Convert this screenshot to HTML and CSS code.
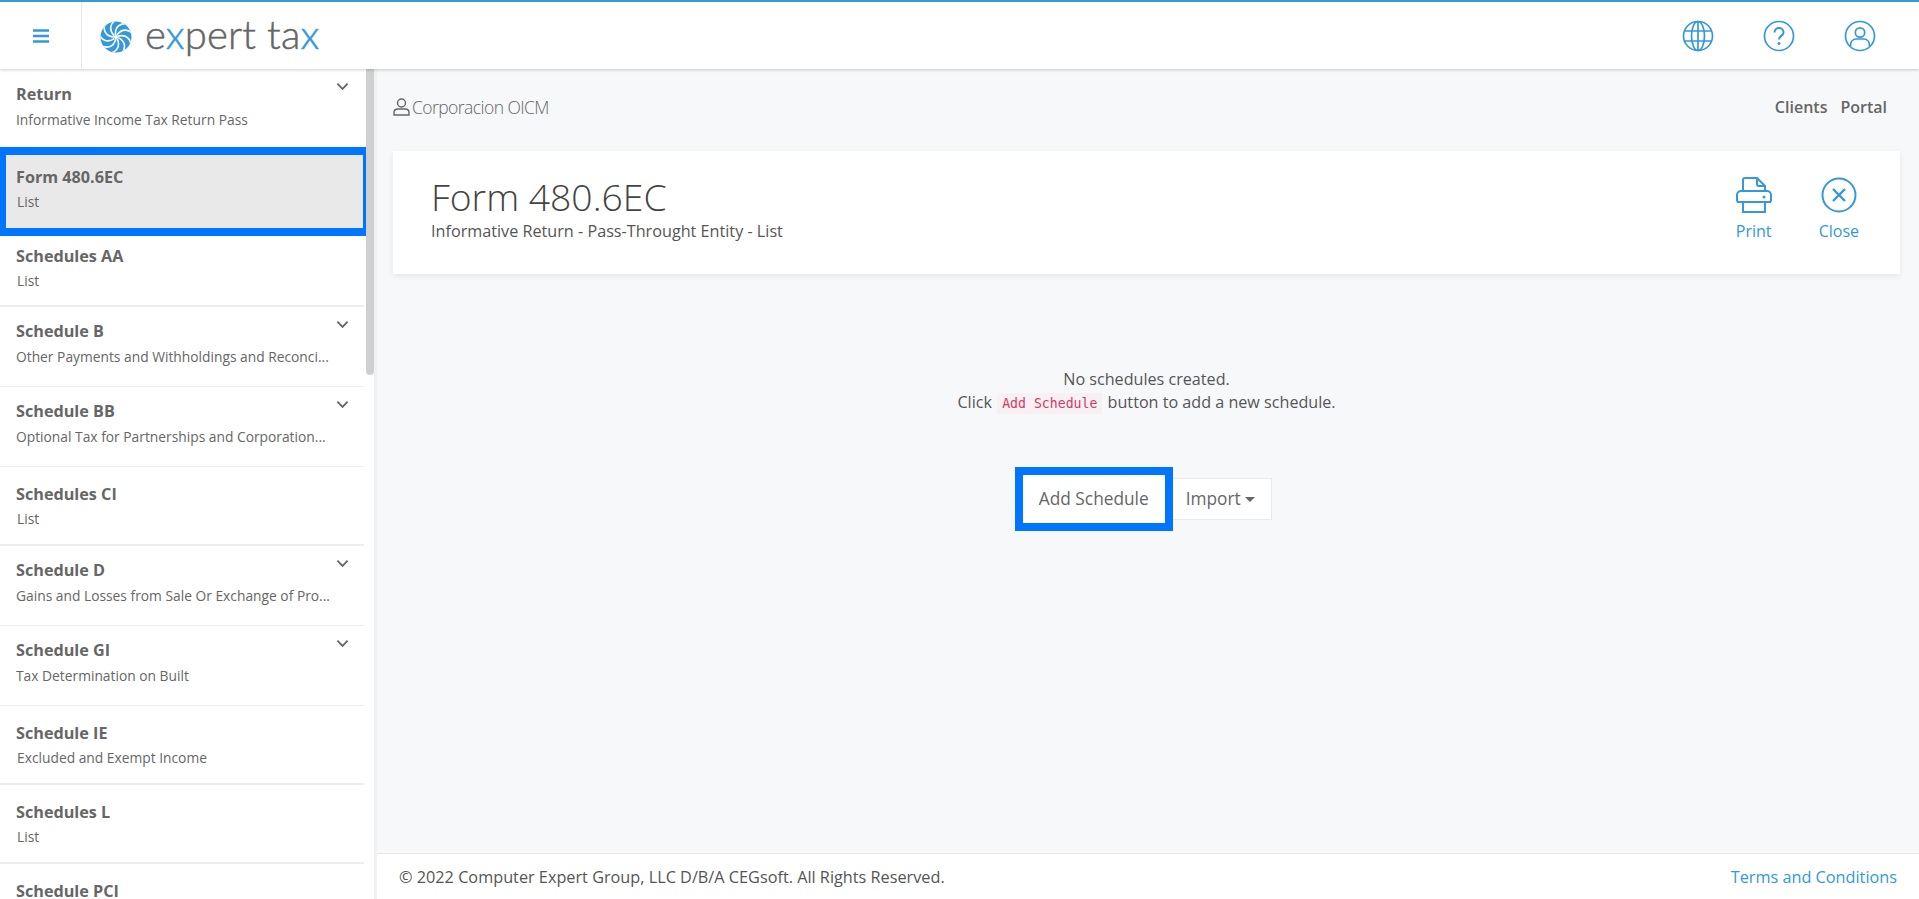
FILE: index.html
```html
<!DOCTYPE html>
<html lang="en">
<head>
<meta charset="utf-8">
<title>Expert Tax</title>
<link rel="stylesheet" href="styles.css">
</head>
<body>
<header class="topbar">
  <div class="burger-cell">
    <svg class="burger" width="16" height="14" viewBox="0 0 16 14"><path d="M0 1.500h16M0 7h16M0 12.500h16" stroke="#3498db" stroke-width="2.600" fill="none"/></svg>
  </div>
  <div class="brand">
    <svg class="swirl" width="32" height="32" viewBox="-16 -16 32 32">
      <defs><clipPath id="c"><circle r="15.500"/></clipPath></defs>
      <circle r="15.500" fill="#3498db"/>
      <g clip-path="url(#c)" fill="none" stroke="#fff" stroke-width="1.600">
        <path d="M1 -2C6 -9 13 -8 18 -2"/>
        <path d="M1 -2C6 -9 13 -8 18 -2" transform="rotate(40)"/>
        <path d="M1 -2C6 -9 13 -8 18 -2" transform="rotate(80)"/>
        <path d="M1 -2C6 -9 13 -8 18 -2" transform="rotate(120)"/>
        <path d="M1 -2C6 -9 13 -8 18 -2" transform="rotate(160)"/>
        <path d="M1 -2C6 -9 13 -8 18 -2" transform="rotate(200)"/>
        <path d="M1 -2C6 -9 13 -8 18 -2" transform="rotate(240)"/>
        <path d="M1 -2C6 -9 13 -8 18 -2" transform="rotate(280)"/>
        <path d="M1 -2C6 -9 13 -8 18 -2" transform="rotate(320)"/>
      </g>
      <circle r="2" fill="#fff"/>
    </svg>
    <span class="wordmark">e<b>x</b>pert ta<b>x</b></span>
  </div>
  <nav class="top-icons">
    <svg width="32" height="32" viewBox="0 0 32 32" fill="none" stroke="#3498db" stroke-width="1.700"><circle cx="16" cy="16" r="14.500"/><ellipse cx="16" cy="16" rx="6.500" ry="14.500"/><path d="M16 1.500v29M2.500 11h27M2.500 21h27"/></svg>
    <svg width="32" height="32" viewBox="0 0 32 32" fill="none" stroke="#3498db" stroke-width="1.700"><circle cx="16" cy="16" r="14.500"/><path d="M11.500 12.500c0-2.800 2-4.500 4.500-4.500s4.500 1.700 4.500 4.200c0 3.800-4.500 3.500-4.500 7.300" stroke-width="2"/><circle cx="16" cy="23.500" r="1.500" fill="#3498db" stroke="none"/></svg>
    <svg width="32" height="32" viewBox="0 0 32 32" fill="none" stroke="#3498db" stroke-width="1.700"><circle cx="16" cy="16" r="14.500"/><circle cx="16" cy="12.500" r="4.700"/><path d="M6.500 26c0-5 3-7 5.500-7h8c2.500 0 5.500 2 5.500 7"/></svg>
  </nav>
</header>
<div class="body-row">
  <aside class="sidebar">
    <ul class="menu">
      <li class="item expandable first"><h4>Return</h4><p>Informative Income Tax Return Pass</p><svg class="chev" width="13" height="9" viewBox="0 0 14 9"><path d="M1.500 1.500 7 7l5.500-5.500" fill="none" stroke="#666" stroke-width="2"/></svg></li>
      <li class="item list active"><h4>Form 480.6EC</h4><p>List</p></li>
      <li class="item list after-active"><h4>Schedules AA</h4><p>List</p></li>
      <li class="item expandable"><h4>Schedule B</h4><p>Other Payments and Withholdings and Reconci...</p><svg class="chev" width="13" height="9" viewBox="0 0 14 9"><path d="M1.500 1.500 7 7l5.500-5.500" fill="none" stroke="#666" stroke-width="2"/></svg></li>
      <li class="item expandable"><h4>Schedule BB</h4><p>Optional Tax for Partnerships and Corporation...</p><svg class="chev" width="13" height="9" viewBox="0 0 14 9"><path d="M1.500 1.500 7 7l5.500-5.500" fill="none" stroke="#666" stroke-width="2"/></svg></li>
      <li class="item list"><h4>Schedules CI</h4><p>List</p></li>
      <li class="item expandable"><h4>Schedule D</h4><p>Gains and Losses from Sale Or Exchange of Pro...</p><svg class="chev" width="13" height="9" viewBox="0 0 14 9"><path d="M1.500 1.500 7 7l5.500-5.500" fill="none" stroke="#666" stroke-width="2"/></svg></li>
      <li class="item expandable"><h4>Schedule GI</h4><p>Tax Determination on Built</p><svg class="chev" width="13" height="9" viewBox="0 0 14 9"><path d="M1.500 1.500 7 7l5.500-5.500" fill="none" stroke="#666" stroke-width="2"/></svg></li>
      <li class="item list"><h4>Schedule IE</h4><p>Excluded and Exempt Income</p></li>
      <li class="item list"><h4>Schedules L</h4><p>List</p></li>
      <li class="item list"><h4>Schedule PCI</h4></li>
    </ul>
    <div class="scrollbar"></div>
  </aside>
  <main class="main">
    <div class="content">
      <div class="crumbs">
        <div class="client">
          <svg width="17" height="18" viewBox="0 0 17 18" fill="none" stroke="#666" stroke-width="1.400"><circle cx="8.500" cy="5" r="4"/><path d="M1 17v-2.500C1 12 3 11 5 11h7c2 0 4 1 4 3.500V17z"/></svg>
          <span>Corporacion OICM</span>
        </div>
        <div class="crumb-links"><span>Clients</span><span>Portal</span></div>
      </div>
      <section class="card">
        <div class="card-title">
          <h1>Form 480.6EC</h1>
          <p>Informative Return - Pass-Throught Entity - List</p>
        </div>
        <div class="actions">
          <div class="action">
            <svg width="36" height="36" viewBox="0 0 36 36" fill="none" stroke="#3498db" stroke-width="2"><path d="M7 14V3a2 2 0 0 1 2-2h12l8 8v5"/><path d="M21 1v6a2 2 0 0 0 2 2h6"/><path d="M7 25H3a2 2 0 0 1-2-2v-5a4 4 0 0 1 4-4h26a4 4 0 0 1 4 4v5a2 2 0 0 1-2 2h-4"/><path d="M1 25h34"/><path d="M7 25v10h22V25"/><circle cx="28" cy="20" r="1.500" fill="#3498db" stroke="none"/></svg>
            <span>Print</span>
          </div>
          <div class="action">
            <svg width="36" height="36" viewBox="0 0 36 36" fill="none" stroke="#3498db" stroke-width="2"><circle cx="18" cy="18" r="16.500"/><path d="m12 12 12 12M24 12 12 24" stroke-width="2.400"/></svg>
            <span>Close</span>
          </div>
        </div>
      </section>
      <section class="empty">
        <p>No schedules created.</p>
        <p>Click <code>Add Schedule</code> button to add a new schedule.</p>
        <div class="buttons">
          <button class="btn primary" type="button">Add Schedule</button>
          <button class="btn secondary" type="button">Import <i class="caret"></i></button>
        </div>
      </section>
    </div>
    <footer class="footer">
      <span>© 2022 Computer Expert Group, LLC D/B/A CEGsoft. All Rights Reserved.</span>
      <a>Terms and Conditions</a>
    </footer>
  </main>
</div>
</body>
</html>
```
FILE: styles.css
```css
* { box-sizing: border-box; }
html, body { margin: 0; height: 100%; overflow: hidden; }
body { font-family: "Open Sans", sans-serif; color: #666; background: #f7f8fa; display: flex; flex-direction: column; height: 899px; }

.topbar { height: 69px; flex: none; display: flex; align-items: center; background: #fff; border-top: 2px solid #3498db; box-shadow: 0 1px 3px rgba(0,0,0,.2); position: relative; z-index: 2; }
.burger-cell { width: 82px; height: 67px; display: flex; align-items: center; justify-content: center; border-right: 1px solid #e8e8e8; }
.brand { display: flex; align-items: center; margin-left: 18px; }
.swirl { margin-top: 2px; }
.wordmark { font-family: "Lato", sans-serif; font-weight: 300; font-size: 40px; letter-spacing: .15px; -webkit-text-stroke: .5px; color: #666; margin-left: 13px; line-height: 40px; margin-top: -3px; }
.wordmark b { font-weight: 300; color: #3498db; }
.top-icons { margin-left: auto; display: flex; gap: 49px; padding-right: 43px; }

.body-row { flex: 1; display: flex; min-height: 0; }
.sidebar { width: 374px; flex: none; background: #fff; position: relative; overflow: hidden; }
.scrollbar { position: absolute; top: 0; right: 0; width: 8px; height: 306px; border-radius: 0 0 4px 4px; background: #cfcfcf; }
.menu { list-style: none; margin: 0; padding: 0; width: 364px; }
.item { position: relative; padding: 0 0 0 16px; height: 80px; border-bottom: 1px solid #ededed; }
.item h4 { margin: 0; padding-top: 13px; font-size: 16.200px; font-weight: 700; line-height: 22px; color: #666; }
.item p { margin: 5px 0 0; font-size: 13.800px; line-height: 20px; color: #666; }
.item.list { height: 79px; border-bottom-width: 2px; }
.item.list h4 { padding-top: 16px; }
.item.list p { margin: 4px 0 0 1px; }
.item.first { height: 78px; border-bottom: 0; }
.item.first h4 { padding-top: 14px; }
.item.active { height: 89px; width: 371px; margin-bottom: -1px; background: #e9e9e9; border: solid #0075ff; border-width: 8px 8px 8px 6px; padding-left: 10px; }
.item.active h4 { padding-top: 11px; }
.item.after-active { height: 71px; margin-top: 1px; }
.item.after-active h4 { padding-top: 9px; }
.chev { position: absolute; right: 15px; top: 13px; }

.main { flex: 1; min-width: 0; display: flex; flex-direction: column; border-left: 3px solid #f0f1f4; }
.content { flex: 1; min-height: 0; padding: 0 19px 0 16px; }
.crumbs { height: 82px; padding: 0 13px 6px 0; display: flex; justify-content: space-between; align-items: center; }
.client { display: flex; align-items: center; gap: 2px; font-size: 17.500px; font-weight: 300; letter-spacing: -.56px; color: #666; line-height: 26px; }
.crumb-links { display: flex; gap: 13px; font-size: 16px; font-weight: 600; color: #666; line-height: 26px; }
.card { height: 123px; background: #fff; box-shadow: 0 2px 6px rgba(0,0,0,.08); display: flex; justify-content: space-between; padding: 0 41px 0 38px; }
.card-title h1 { margin: 24px 0 0; font-size: 37.300px; font-weight: 300; line-height: 44px; color: #444; }
.card-title p { margin: 2px 0 0; font-size: 16.200px; line-height: 20px; color: #555; }
.actions { display: flex; gap: 47px; padding-top: 26px; }
.action { display: flex; flex-direction: column; align-items: center; font-size: 16px; line-height: 24px; color: #3498db; gap: 6px; }
.empty { padding-top: 94px; text-align: center; font-size: 16.150px; color: #555; }
.empty p { margin: 0; line-height: 23px; }
code { font-family: "DejaVu Sans Mono", monospace; font-size: 13.200px; color: #d63865; background: #f7f1f3; padding: 3px 5px; margin: 0 1px; }
.buttons { display: flex; justify-content: center; margin-top: 52px; align-items: center; margin-left: -6px; }
.btn { font-family: inherit; font-size: 17.300px; line-height: 24px; color: #666; background: #fff; border: 1px solid #e9ecef; height: 42px; }
.btn.primary { height: 64px; border: 8px solid #0075ff; padding: 0 16px; position: relative; z-index: 1; }
.btn.secondary { padding: 0 16px 0 13px; border-left: 0; }
.caret { display: inline-block; width: 0; height: 0; border: 5px solid transparent; border-top-color: #666; border-bottom: 0; vertical-align: 3px; }
.footer { height: 46px; flex: none; background: #fff; border-top: 1px solid #e6e6e6; display: flex; align-items: center; justify-content: space-between; padding: 0 22px 0 22px; font-size: 16.250px; color: #555; }
.footer a { color: #3498db; }
```
